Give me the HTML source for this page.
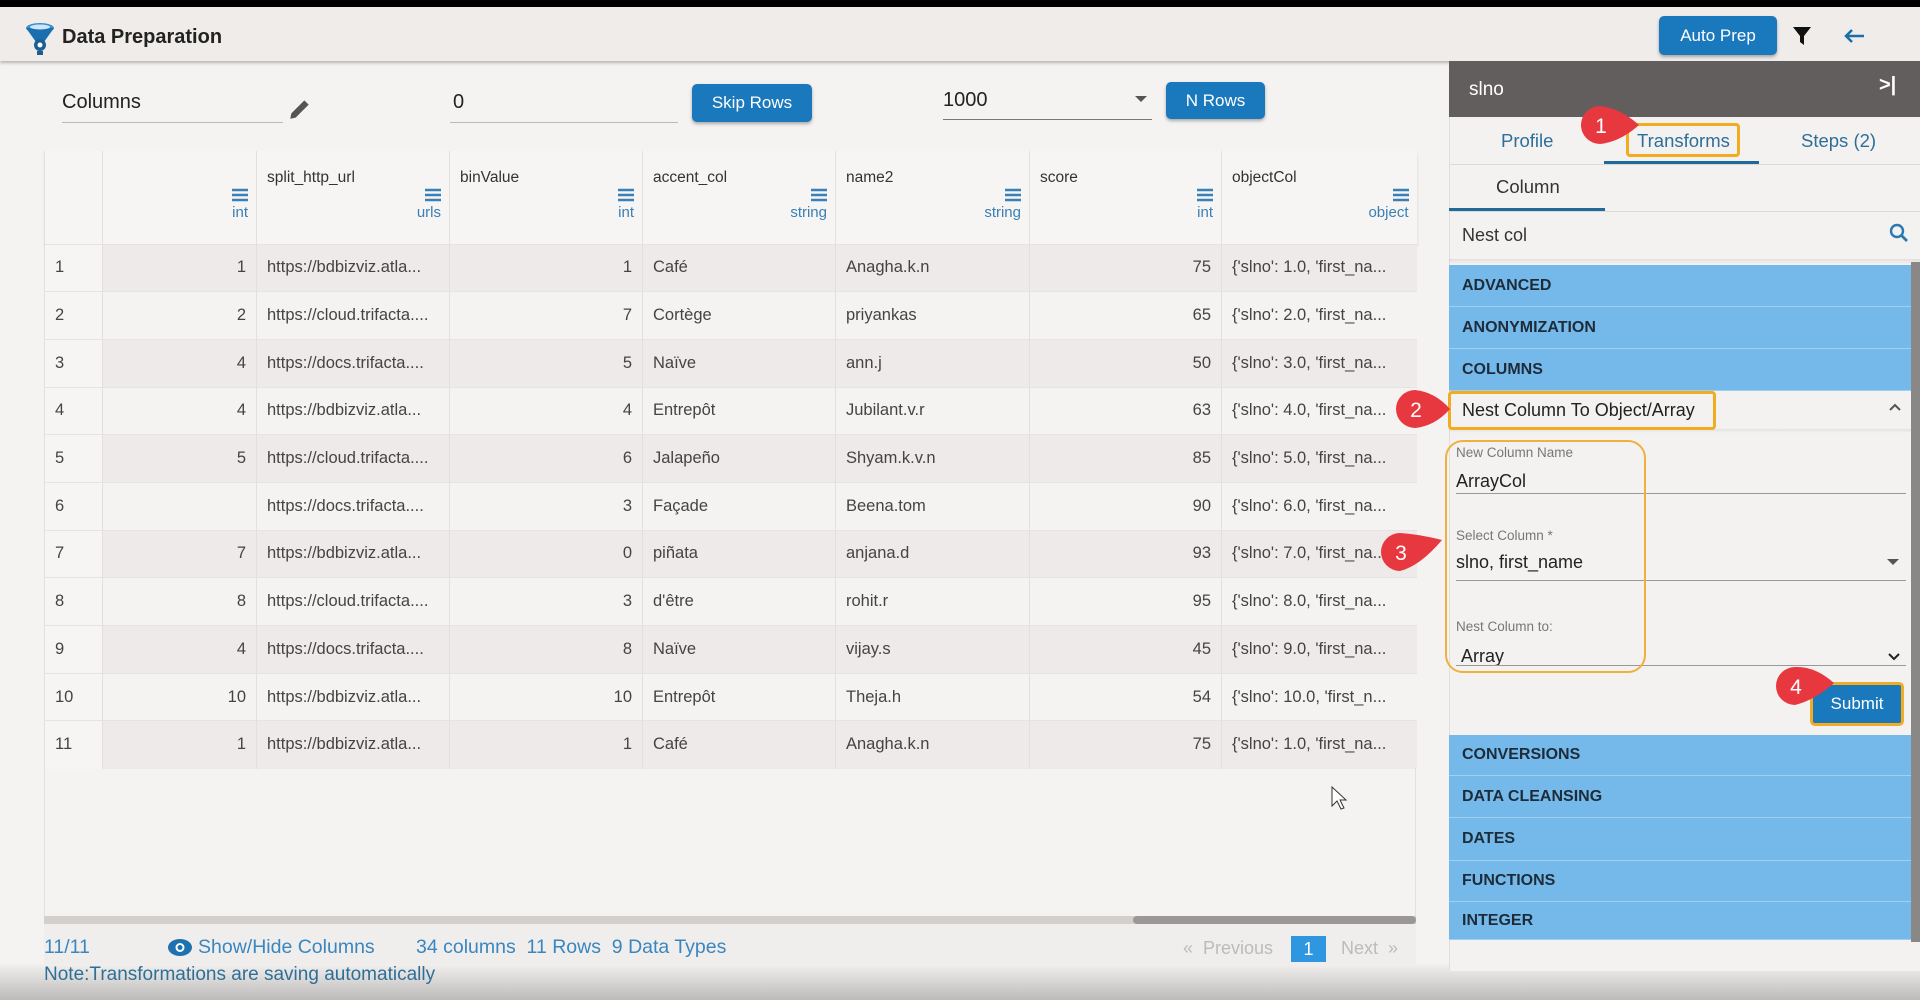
<!DOCTYPE html>
<html><head><meta charset="utf-8"><style>
*{box-sizing:border-box;margin:0;padding:0}
body{width:1920px;height:1000px;overflow:hidden;background:#f5f3f1;font-family:"Liberation Sans",sans-serif;color:#333;position:relative}
.a{position:absolute}
.btn{position:absolute;background:#1a78bd;color:#fff;border-radius:5px;font-size:17px;display:flex;align-items:center;justify-content:center;box-shadow:0 2px 3px rgba(0,0,0,.3)}
table{position:absolute;left:44px;top:151px;border-collapse:collapse;table-layout:fixed;font-size:16.5px;color:#444}
td,th{border-left:1px solid #e2e0de;height:47.7px;padding:0 10px;white-space:nowrap;overflow:hidden}
th{height:93px;background:#f6f5f4;font-weight:normal;text-align:left;vertical-align:top;position:relative;color:#333;padding-top:18px;font-size:15.5px}
th .m{position:absolute;right:8px;top:37px;color:#3a7fb5;font-size:15px;text-align:right;line-height:17px}
th .m svg{display:block;margin-left:auto;margin-bottom:2px}
thead tr{box-shadow:0 3px 3px rgba(0,0,0,.12)}
tbody tr:nth-child(odd) td{background:#edeae9}
tbody td:first-child{background:#f6f5f4!important}
td.r{text-align:right}
tbody tr{border-top:1px solid #e6e3e1}
.cat{position:absolute;left:1449px;width:462px;background:#74b9ea;color:#1e2c3a;font-weight:bold;font-size:16px;padding-left:13px;display:flex;align-items:center;border-bottom:1px solid #9fd0f2}
.lab{position:absolute;left:1456px;font-size:13.5px;color:#777}
.val{position:absolute;left:1456px;font-size:18px;color:#222}
.ul{position:absolute;left:1456px;width:450px;height:1px;background:#999}
</style></head><body>
<div class="a" style="left:0;top:0;width:1920px;height:7px;background:#000"></div>
<div class="a" style="left:0;top:7px;width:1920px;height:54px;background:#efecea;box-shadow:0 2px 3px rgba(0,0,0,.25)"></div>
<svg class="a" style="left:24px;top:22px" width="34" height="34" viewBox="0 0 34 34"><ellipse cx="16" cy="6" rx="14" ry="5" fill="#3b8fd0"/><path d="M2 6 L12 20 H20 L30 6 Z" fill="#1a6fb0"/><ellipse cx="16" cy="5" rx="10" ry="2.5" fill="#cfe6f7"/><circle cx="16" cy="23" r="6" fill="#1a5f95"/><circle cx="16" cy="23" r="2.5" fill="#fff"/><rect x="13" y="29" width="6" height="4" fill="#1a5f95"/></svg>
<div class="a" style="left:62px;top:26px;font-size:20px;font-weight:bold;color:#222">Data Preparation</div>
<div class="btn" style="left:1659px;top:16px;width:118px;height:39px;font-size:17px">Auto Prep</div>
<svg class="a" style="left:1792px;top:26px" width="20" height="20" viewBox="0 0 20 20"><path d="M1 1H19L12 10V19L8 16V10Z" fill="#111"/></svg>
<svg class="a" style="left:1843px;top:28px" width="22" height="16" viewBox="0 0 22 16"><path d="M21 8H3M9 2L3 8L9 14" stroke="#1a6fa8" stroke-width="2.5" fill="none"/></svg>

<div class="a" style="left:62px;top:91px;font-size:20px;color:#222">Columns</div>
<div class="a" style="left:62px;top:122px;width:221px;height:1px;background:#bbb"></div>
<svg class="a" style="left:287px;top:96px" width="26" height="26" viewBox="0 0 24 24"><path d="M3 21L4 16L16 4L20 8L8 20Z" fill="#555"/></svg>
<div class="a" style="left:453px;top:91px;font-size:20px;color:#222">0</div>
<div class="a" style="left:450px;top:122px;width:228px;height:1px;background:#bbb"></div>
<div class="btn" style="left:692px;top:84px;width:120px;height:38px">Skip Rows</div>
<div class="a" style="left:943px;top:89px;font-size:20px;color:#222">1000</div>
<div class="a" style="left:943px;top:119px;width:209px;height:1px;background:#777"></div>
<div class="a" style="left:1135px;top:96px;border:6px solid transparent;border-top-color:#555"></div>
<div class="btn" style="left:1166px;top:82px;width:99px;height:37px">N Rows</div>

<table>
<colgroup><col style="width:58px"><col style="width:154px"><col style="width:193px"><col style="width:193px"><col style="width:193px"><col style="width:194px"><col style="width:192px"><col style="width:195px"></colgroup>
<thead><tr><th></th>
<th><div class="m"><svg width="16" height="14"><path d="M0 2H16M0 7H16M0 12H16" stroke="#3a7fb5" stroke-width="2.4"/></svg>int</div></th>
<th>split_http_url<div class="m"><svg width="16" height="14"><path d="M0 2H16M0 7H16M0 12H16" stroke="#3a7fb5" stroke-width="2.4"/></svg>urls</div></th>
<th>binValue<div class="m"><svg width="16" height="14"><path d="M0 2H16M0 7H16M0 12H16" stroke="#3a7fb5" stroke-width="2.4"/></svg>int</div></th>
<th>accent_col<div class="m"><svg width="16" height="14"><path d="M0 2H16M0 7H16M0 12H16" stroke="#3a7fb5" stroke-width="2.4"/></svg>string</div></th>
<th>name2<div class="m"><svg width="16" height="14"><path d="M0 2H16M0 7H16M0 12H16" stroke="#3a7fb5" stroke-width="2.4"/></svg>string</div></th>
<th>score<div class="m"><svg width="16" height="14"><path d="M0 2H16M0 7H16M0 12H16" stroke="#3a7fb5" stroke-width="2.4"/></svg>int</div></th>
<th>objectCol<div class="m"><svg width="16" height="14"><path d="M0 2H16M0 7H16M0 12H16" stroke="#3a7fb5" stroke-width="2.4"/></svg>object</div></th></tr></thead>
<tbody>
<tr><td>1</td><td class="r">1</td><td>https://bdbizviz.atla...</td><td class="r">1</td><td>Café</td><td>Anagha.k.n</td><td class="r">75</td><td>{'slno': 1.0, 'first_na...</td></tr>
<tr><td>2</td><td class="r">2</td><td>https://cloud.trifacta....</td><td class="r">7</td><td>Cortège</td><td>priyankas</td><td class="r">65</td><td>{'slno': 2.0, 'first_na...</td></tr>
<tr><td>3</td><td class="r">4</td><td>https://docs.trifacta....</td><td class="r">5</td><td>Naïve</td><td>ann.j</td><td class="r">50</td><td>{'slno': 3.0, 'first_na...</td></tr>
<tr><td>4</td><td class="r">4</td><td>https://bdbizviz.atla...</td><td class="r">4</td><td>Entrepôt</td><td>Jubilant.v.r</td><td class="r">63</td><td>{'slno': 4.0, 'first_na...</td></tr>
<tr><td>5</td><td class="r">5</td><td>https://cloud.trifacta....</td><td class="r">6</td><td>Jalapeño</td><td>Shyam.k.v.n</td><td class="r">85</td><td>{'slno': 5.0, 'first_na...</td></tr>
<tr><td>6</td><td class="r"></td><td>https://docs.trifacta....</td><td class="r">3</td><td>Façade</td><td>Beena.tom</td><td class="r">90</td><td>{'slno': 6.0, 'first_na...</td></tr>
<tr><td>7</td><td class="r">7</td><td>https://bdbizviz.atla...</td><td class="r">0</td><td>piñata</td><td>anjana.d</td><td class="r">93</td><td>{'slno': 7.0, 'first_na...</td></tr>
<tr><td>8</td><td class="r">8</td><td>https://cloud.trifacta....</td><td class="r">3</td><td>d'être</td><td>rohit.r</td><td class="r">95</td><td>{'slno': 8.0, 'first_na...</td></tr>
<tr><td>9</td><td class="r">4</td><td>https://docs.trifacta....</td><td class="r">8</td><td>Naïve</td><td>vijay.s</td><td class="r">45</td><td>{'slno': 9.0, 'first_na...</td></tr>
<tr><td>10</td><td class="r">10</td><td>https://bdbizviz.atla...</td><td class="r">10</td><td>Entrepôt</td><td>Theja.h</td><td class="r">54</td><td>{'slno': 10.0, 'first_n...</td></tr>
<tr><td>11</td><td class="r">1</td><td>https://bdbizviz.atla...</td><td class="r">1</td><td>Café</td><td>Anagha.k.n</td><td class="r">75</td><td>{'slno': 1.0, 'first_na...</td></tr>
</tbody></table>
<div class="a" style="left:44px;top:768px;width:1372px;height:148px;border-left:1px solid #e2e0de;border-right:1px solid #e2e0de"></div>
<div class="a" style="left:44px;top:916px;width:1372px;height:8px;background:#d3cfcd"></div>
<div class="a" style="left:1133px;top:916px;width:283px;height:8px;background:#9b9796;border-radius:4px"></div>
<div class="a" style="left:44px;top:924px;width:1372px;height:40px;background:#f0eeec"></div>
<div class="a" style="left:44px;top:936px;font-size:19.5px;color:#3a86c0;white-space:nowrap">11/11</div>
<svg class="a" style="left:168px;top:939px" width="24" height="17" viewBox="0 0 24 17"><ellipse cx="12" cy="8.5" rx="12" ry="8.5" fill="#1f72b0"/><circle cx="12" cy="8.5" r="4.5" fill="#fff"/><circle cx="12" cy="8.5" r="2.5" fill="#1f72b0"/></svg>
<div class="a" style="left:198px;top:936px;font-size:19.5px;color:#3a86c0;white-space:nowrap">Show/Hide Columns</div>
<div class="a" style="left:416px;top:936px;font-size:19.5px;color:#3a86c0;white-space:nowrap">34 columns&nbsp; 11 Rows&nbsp; 9 Data Types</div>
<div class="a" style="left:1183px;top:938px;font-size:18px;color:#bbb">« &nbsp;Previous</div>
<div class="a" style="left:1291px;top:936px;width:35px;height:26px;background:#2f97e0;color:#fff;font-size:18px;text-align:center;line-height:26px">1</div>
<div class="a" style="left:1341px;top:938px;font-size:18px;color:#bbb">Next &nbsp;»</div>
<div class="a" style="left:0;top:964px;width:1920px;height:36px;background:linear-gradient(#f2f0ee,#bdbbb9)"></div>
<div class="a" style="left:44px;top:964px;font-size:19px;color:#2e6f98">Note:Transformations are saving automatically</div>

<!-- right panel -->
<div class="a" style="left:1449px;top:61px;width:471px;height:910px;background:#f4f2f0;border-left:1px solid #e0dedc"></div>
<div class="a" style="left:1449px;top:61px;width:471px;height:56px;background:#625e5d"></div>
<div class="a" style="left:1469px;top:79px;font-size:19px;color:#fff">slno</div>
<div class="a" style="left:1879px;top:74px;font-size:20px;color:#fff;font-weight:bold">&gt;|</div>
<div class="a" style="left:1501px;top:130px;font-size:18.5px;color:#2d6f99">Profile</div>
<div class="a" style="left:1637px;top:130px;font-size:18.5px;color:#2d6f99">Transforms</div>
<div class="a" style="left:1626px;top:123px;width:114px;height:34px;border:3px solid #f2ac22;border-radius:4px"></div>
<div class="a" style="left:1801px;top:130px;font-size:18.5px;color:#2d6f99">Steps (2)</div>
<div class="a" style="left:1604px;top:161px;width:155px;height:3px;background:#1f6a9a"></div>
<div class="a" style="left:1449px;top:164px;width:471px;height:1px;background:#dcdad8"></div>
<div class="a" style="left:1496px;top:176px;font-size:18.5px;color:#333">Column</div>
<div class="a" style="left:1449px;top:208px;width:156px;height:3px;background:#1f6a9a"></div>
<div class="a" style="left:1449px;top:211px;width:471px;height:1px;background:#dcdad8"></div>
<div class="a" style="left:1462px;top:225px;font-size:18px;color:#333">Nest col</div>
<svg class="a" style="left:1889px;top:223px" width="20" height="20" viewBox="0 0 20 20"><circle cx="8" cy="8" r="6" stroke="#2c78b0" stroke-width="2.4" fill="none"/><path d="M12.5 12.5L18 18" stroke="#2c78b0" stroke-width="2.8"/></svg>
<div class="a" style="left:1449px;top:259px;width:471px;height:5px;background:linear-gradient(rgba(0,0,0,.08),transparent)"></div>
<div class="cat" style="top:265px;height:42px">ADVANCED</div>
<div class="cat" style="top:307px;height:42px">ANONYMIZATION</div>
<div class="cat" style="top:349px;height:42px">COLUMNS</div>
<div class="a" style="left:1911px;top:262px;width:9px;height:680px;background:#8a8887"></div>
<div class="a" style="left:1462px;top:400px;font-size:18px;color:#222">Nest Column To Object/Array</div>
<svg class="a" style="left:1888px;top:402px" width="14" height="10" viewBox="0 0 14 10"><path d="M2 8L7 3L12 8" stroke="#555" stroke-width="2" fill="none"/></svg>
<div class="a" style="left:1449px;top:429px;width:462px;height:4px;background:linear-gradient(rgba(0,0,0,.07),transparent)"></div>
<div class="a" style="left:1448px;top:391px;width:268px;height:39px;border:3px solid #f2ac22;border-radius:4px"></div>
<div class="lab" style="top:445px">New Column Name</div>
<div class="val" style="top:471px">ArrayCol</div>
<div class="ul" style="top:493px"></div>
<div class="lab" style="top:528px">Select Column *</div>
<div class="val" style="top:552px">slno, first_name</div>
<div class="a" style="left:1887px;top:559px;border:6px solid transparent;border-top-color:#555"></div>
<div class="ul" style="top:580px"></div>
<div class="lab" style="top:619px">Nest Column to:</div>
<div class="val" style="top:646px;left:1461px">Array</div>
<svg class="a" style="left:1887px;top:652px" width="14" height="10" viewBox="0 0 14 10"><path d="M2 2L7 7L12 2" stroke="#222" stroke-width="2" fill="none"/></svg>
<div class="ul" style="top:665px"></div>
<div class="a" style="left:1445px;top:440px;width:201px;height:233px;border:2px solid #f0b040;border-radius:18px"></div>
<div class="a" style="left:1810px;top:682px;width:94px;height:44px;border:3px solid #f2ac22;border-radius:5px;background:#1a78bd;color:#fff;font-size:17px;display:flex;align-items:center;justify-content:center">Submit</div>
<div class="cat" style="top:735px;height:41px">CONVERSIONS</div>
<div class="cat" style="top:776px;height:42px">DATA CLEANSING</div>
<div class="cat" style="top:818px;height:43px">DATES</div>
<div class="cat" style="top:861px;height:41px">FUNCTIONS</div>
<div class="cat" style="top:902px;height:38px">INTEGER</div>

<svg class="a" style="left:0;top:0" width="1920" height="1000">
<g fill="#e8383f">
<path d="M1600 106 A19 19 0 1 0 1600 144 Q1620 142 1639 125 Q1620 108 1600 106Z"/>
<path d="M1415 390 A19 19 0 1 0 1415 428 Q1435 426 1450 409 Q1435 392 1415 390Z"/>
<path d="M1400 533 A19 19 0 1 0 1400 571 Q1420 566 1442 540 Q1418 534 1400 533Z"/>
<path d="M1795 667 A19 19 0 1 0 1795 705 Q1815 700 1834 683 Q1815 666 1795 667Z"/>
</g>
<g fill="#fff" font-family="Liberation Sans" font-size="21" text-anchor="middle">
<text x="1601" y="133">1</text><text x="1416" y="417">2</text><text x="1401" y="560">3</text><text x="1796" y="694">4</text>
</g>
<path d="M1332 787L1332 806L1337 801L1341 809L1344 808L1340 800L1346 800Z" fill="#fff" stroke="#333" stroke-width="1"/>
</svg>
</body></html>
